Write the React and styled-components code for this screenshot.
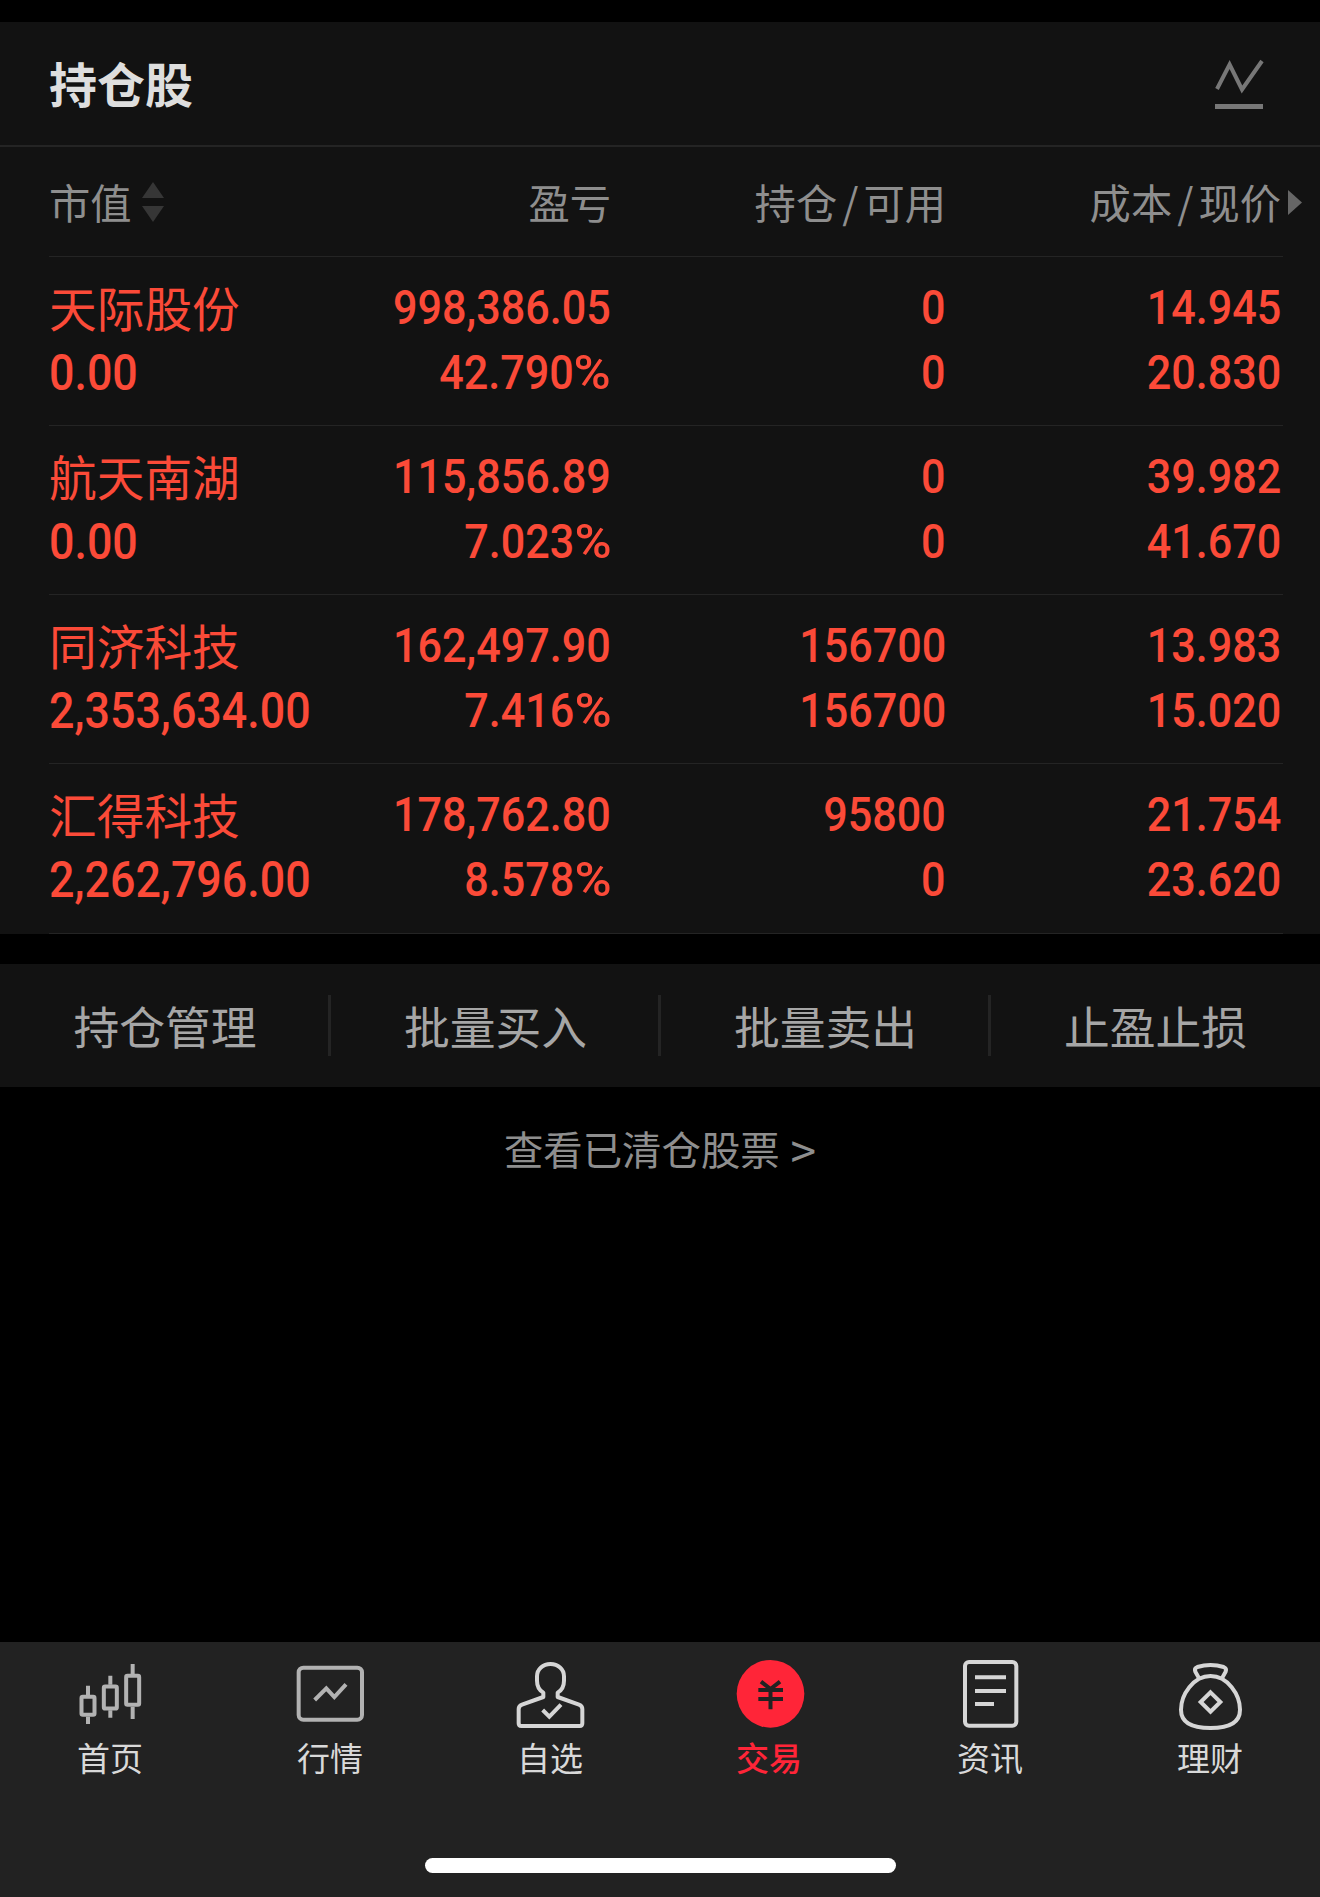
import React from 'react';
import styled, { createGlobalStyle } from 'styled-components';

const GlobalStyle = createGlobalStyle`
    * {
        box-sizing: border-box;
    }

    body {
        margin: 0;
        background-color: #000;
        font-family: 'Noto Sans CJK SC', sans-serif;
    }
`;

const Page = styled.div`
    display: flex;
    flex-direction: column;
    width: 1320px;
    height: 1897px;
    padding-top: 22px;
    background-color: #000;
    overflow: hidden;
`;

const Panel = styled.section`
    background-color: #121212;
`;

const PanelHeader = styled.header`
    display: flex;
    align-items: center;
    justify-content: space-between;
    height: 125px;
    padding: 0 56px 0 49px;
    border-bottom: 2px solid #242424;
`;

const Title = styled.h1`
    margin: 0 0 3px;
    font-size: 48px;
    font-weight: 700;
    line-height: 60px;
    color: #dedede;
`;

const Table = styled.div`
    padding: 0 37px 0 49px;
`;

const Row = styled.div`
    display: grid;
    grid-template-columns: 282px 280px 335px 335px;
    border-bottom: 1px solid #242424;
`;

const HeadRow = styled(Row)`
    height: 110px;
    align-items: center;
    color: #8e8e8e;
`;

const StockRow = styled(Row)`
    height: 169px;
    padding-top: 17px;
    color: #fb4a38;

    &:last-child {
        height: 170px;
    }
`;

const HeadCell = styled.div`
    display: flex;
    align-items: center;
    justify-content: ${(props) => (props.$left ? 'flex-start' : 'flex-end')};
    padding-bottom: 2px;
    font-size: 41.3px;
    line-height: 60px;
    white-space: nowrap;
`;

const Slash = styled.span`
    margin: 0 5px;
`;

const SortIcon = styled.svg`
    margin: 3px 0 0 10px;
`;

const MoreIcon = styled.svg`
    margin: 3px -21px 0 7px;
`;

const Cell = styled.div`
    display: flex;
    flex-direction: column;
    align-items: ${(props) => (props.$left ? 'flex-start' : 'flex-end')};
`;

const StockName = styled.span`
    height: 66px;
    font-size: 47.7px;
    line-height: 66px;
    white-space: nowrap;
`;

const Figure = styled.span`
    height: 65px;
    font-family: Roboto, sans-serif;
    font-size: ${(props) => (props.$left ? '49.5px' : '48.5px')};
    font-weight: 500;
    line-height: 67px;
    white-space: nowrap;
    transform: scaleX(${(props) => (props.$left ? 0.905 : 0.89)});
    transform-origin: ${(props) => (props.$left ? 'left' : 'right')} center;
`;

const Percent = styled.span`
    display: inline-block;
    margin-left: 6px;
    transform: scaleX(1.17);
    transform-origin: right center;
`;

const Actions = styled.nav`
    display: grid;
    grid-template-columns: 331px 330px 330px 329px;
    align-items: center;
    height: 123px;
    margin-top: 30px;
    background-color: #121212;
`;

const Action = styled.div`
    height: 61px;
    padding-left: 2px;
    border-right: 3px solid #242424;
    font-size: 45.8px;
    line-height: 60px;
    text-align: center;
    color: #a6a6a6;

    &:last-child {
        padding-left: 0;
        border-right: none;
    }
`;

const ClearedLink = styled.div`
    padding-top: 31px;
    font-size: 39.4px;
    line-height: 60px;
    text-align: center;
    color: #8e8e8e;
`;

const Arrow = styled.span`
    margin-left: 2px;
    font-size: 46px;
    line-height: 0;
    vertical-align: -4px;
`;

const TabBar = styled.footer`
    display: flex;
    flex-direction: column;
    align-items: center;
    height: 255px;
    margin-top: auto;
    background-color: #222;
`;

const Tabs = styled.div`
    display: grid;
    grid-template-columns: repeat(6, 1fr);
    width: 100%;
    height: 216px;
    padding-top: 16px;
`;

const Tab = styled.div`
    display: flex;
    flex-direction: column;
    align-items: center;
    font-size: 33px;
    font-weight: ${(props) => (props.$active ? 500 : 400)};
    line-height: 50px;
    color: ${(props) => (props.$active ? '#ff2538' : '#d9d9d9')};
`;

const TabLabel = styled.span`
    padding-right: ${(props) => (props.$active ? '2px' : '0')};
`;

const TabIcon = styled.svg`
    display: block;
    width: 72px;
    height: 72px;
    margin-bottom: 2px;
    overflow: visible;
    fill: none;
    stroke: ${(props) => (props.$dim ? '#b2b2b2' : '#d6d6d6')};
    stroke-width: 12;
`;

const HomeIndicator = styled.div`
    width: 471px;
    height: 15px;
    border-radius: 8px;
    background-color: #fff;
`;

const stocks = [
    { name: '天际股份', value: '0.00', profit: '998,386.05', rate: '42.790', held: '0', usable: '0', cost: '14.945', price: '20.830' },
    { name: '航天南湖', value: '0.00', profit: '115,856.89', rate: '7.023', held: '0', usable: '0', cost: '39.982', price: '41.670' },
    { name: '同济科技', value: '2,353,634.00', profit: '162,497.90', rate: '7.416', held: '156700', usable: '156700', cost: '13.983', price: '15.020' },
    { name: '汇得科技', value: '2,262,796.00', profit: '178,762.80', rate: '8.578', held: '95800', usable: '0', cost: '21.754', price: '23.620' },
];

const actions = ['持仓管理', '批量买入', '批量卖出', '止盈止损'];

function HomeIcon() {
    return (
        <TabIcon viewBox="0 0 216 216" $dim>
            <rect x="22.5" y="116.5" width="39" height="54" rx="4" />
            <path d="M42 83v28M42 176v22" />
            <rect x="89.5" y="85.5" width="39" height="66" rx="4" />
            <path d="M109 53v27M109 157v22" />
            <rect x="156.5" y="53.5" width="39" height="87" rx="4" />
            <path d="M176 18v30M176 146v37" />
        </TabIcon>
    );
}

function MarketIcon() {
    return (
        <TabIcon viewBox="0 0 216 216" $dim>
            <rect x="14" y="29" width="190" height="156" rx="14" />
            <path d="M62 126L97 91L121 117L156 79" />
        </TabIcon>
    );
}

function WatchlistIcon() {
    return (
        <TabIcon viewBox="0 0 216 216">
            <path
                strokeLinejoin="round"
                d="M88 104C75 96 69 82 69 68V55C69 33 87 18 109.5 18S150 33 150 55V68C150 82 144 96 131 104V117L195 140Q205 144 205 153V196Q205 204 197 204H22Q14 204 14 196V153Q14 144 24 140L88 117Z"
            />
            <path d="M86 156L106 176L141 140" />
        </TabIcon>
    );
}

function TradeIcon() {
    return (
        <TabIcon viewBox="0 0 216 216">
            <circle cx="109.5" cy="107.5" r="101.5" fill="#ff2538" stroke="none" />
            <path d="M81 71L109.5 93L138 71M73 96H147M73 123H147M109.5 93V154" stroke="#222" strokeLinejoin="bevel" />
        </TabIcon>
    );
}

function NewsIcon() {
    return (
        <TabIcon viewBox="0 0 216 216">
            <rect x="33" y="12" width="154" height="191" rx="12" />
            <path d="M63 58H156M63 99H156M63 138H120" />
        </TabIcon>
    );
}

function WealthIcon() {
    return (
        <TabIcon viewBox="0 0 216 216">
            <path d="M109.5 54C58 54 21 110 21 155C21 197 58 210 109.5 210S198 197 198 155C198 110 161 54 109.5 54Z" />
            <path d="M76 62L64 41Q60 31 70 27Q90 21 109.5 21Q130 21 149 27Q159 31 155 41L143 62" />
            <path d="M109.5 103L139 132L109.5 161L80 132Z" />
        </TabIcon>
    );
}

const tabs = [
    { label: '首页', Icon: HomeIcon },
    { label: '行情', Icon: MarketIcon },
    { label: '自选', Icon: WatchlistIcon },
    { label: '交易', Icon: TradeIcon, active: true },
    { label: '资讯', Icon: NewsIcon },
    { label: '理财', Icon: WealthIcon },
];

function Holdings() {
    return (
        <Panel>
            <PanelHeader>
                <Title>持仓股</Title>
                <svg width="49" height="51" viewBox="0 0 49 51" fill="none" stroke="#777">
                    <path d="M2 31L14.6 6.5L27 31.5L47 3" strokeWidth="4" />
                    <path d="M0 48.5H48" strokeWidth="5" />
                </svg>
            </PanelHeader>
            <Table>
                <HeadRow>
                    <HeadCell $left>
                        市值
                        <SortIcon width="22" height="40" viewBox="0 0 22 40" fill="#363636">
                            <path d="M11 0L22 16H0Z" />
                            <path d="M11 40L22 24H0Z" />
                        </SortIcon>
                    </HeadCell>
                    <HeadCell>盈亏</HeadCell>
                    <HeadCell>持仓<Slash>/</Slash>可用</HeadCell>
                    <HeadCell>
                        成本<Slash>/</Slash>现价
                        <MoreIcon width="14" height="25" viewBox="0 0 14 25" fill="#666">
                            <path d="M0 0L14 12.5L0 25Z" />
                        </MoreIcon>
                    </HeadCell>
                </HeadRow>
                {stocks.map((stock) => (
                    <StockRow key={stock.name}>
                        <Cell $left>
                            <StockName>{stock.name}</StockName>
                            <Figure $left>{stock.value}</Figure>
                        </Cell>
                        <Cell>
                            <Figure>{stock.profit}</Figure>
                            <Figure>{stock.rate}<Percent>%</Percent></Figure>
                        </Cell>
                        <Cell>
                            <Figure>{stock.held}</Figure>
                            <Figure>{stock.usable}</Figure>
                        </Cell>
                        <Cell>
                            <Figure>{stock.cost}</Figure>
                            <Figure>{stock.price}</Figure>
                        </Cell>
                    </StockRow>
                ))}
            </Table>
        </Panel>
    );
}

function App() {
    return (
        <Page>
            <GlobalStyle />
            <Holdings />
            <Actions>
                {actions.map((label) => (
                    <Action key={label}>{label}</Action>
                ))}
            </Actions>
            <ClearedLink>查看已清仓股票 <Arrow>&gt;</Arrow></ClearedLink>
            <TabBar>
                <Tabs>
                    {tabs.map(({ label, Icon, active }) => (
                        <Tab key={label} $active={active}>
                            <Icon />
                            <TabLabel $active={active}>{label}</TabLabel>
                        </Tab>
                    ))}
                </Tabs>
                <HomeIndicator />
            </TabBar>
        </Page>
    );
}

export default App;
